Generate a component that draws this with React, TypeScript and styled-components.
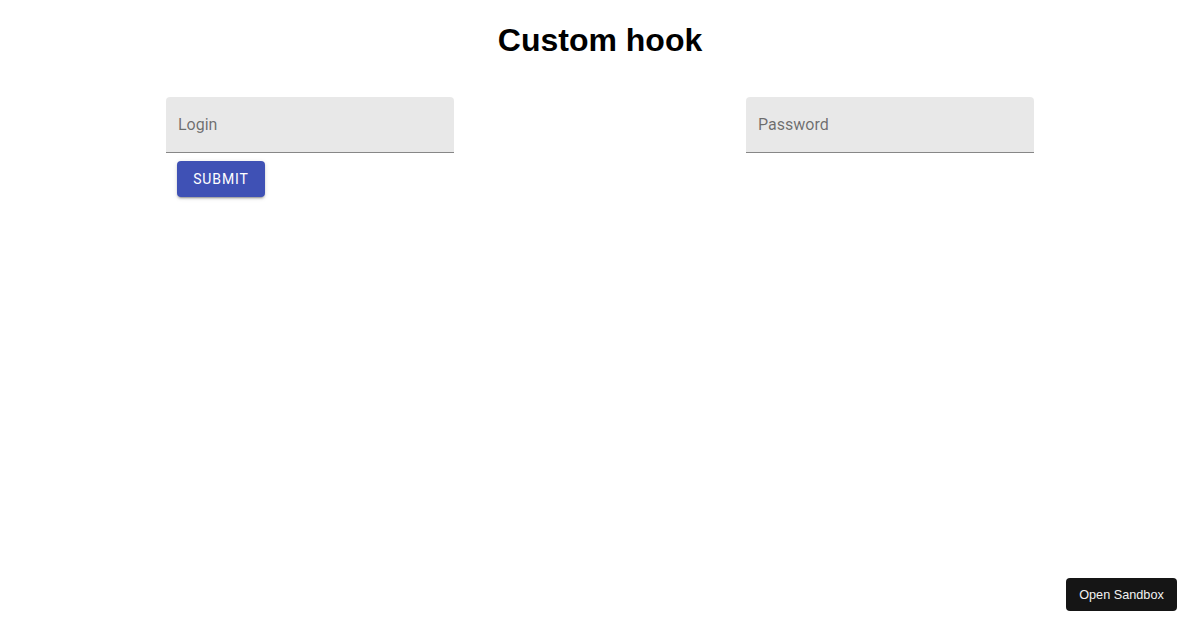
import styled, { createGlobalStyle } from "styled-components";

const GlobalStyle = createGlobalStyle`
  html, body {
    margin: 0;
    padding: 0;
    background: #ffffff;
    font-family: "Roboto", "Liberation Sans", Arial, sans-serif;
  }
`;

const Page = styled.div`
  width: 1200px;
  height: 630px;
  position: relative;
  display: flex;
  flex-direction: column;
  align-items: center;
`;

const Title = styled.h1`
  margin: 22px 0 0;
  font-family: "Liberation Sans", Arial, sans-serif;
  font-size: 32px;
  font-weight: 700;
  line-height: 37px;
  color: #000;
`;

const FormRow = styled.div`
  width: 868px;
  margin-top: 38px;
  display: flex;
  justify-content: space-between;
  align-items: flex-start;
`;

const Column = styled.div`
  display: flex;
  flex-direction: column;
  align-items: flex-start;
`;

const Field = styled.div`
  width: 288px;
  height: 56px;
  box-sizing: border-box;
  background: rgba(0, 0, 0, 0.09);
  border-radius: 4px 4px 0 0;
  border-bottom: 1px solid rgba(0, 0, 0, 0.42);
  display: flex;
  align-items: center;
  padding: 0 12px;
`;

const Label = styled.span`
  font-size: 16px;
  color: rgba(0, 0, 0, 0.54);
  line-height: 1;
`;

const SubmitButton = styled.button`
  margin: 8px 0 0 11px;
  width: 88px;
  height: 36px;
  border: none;
  border-radius: 4px;
  background: #3f51b5;
  color: #fff;
  font-family: "Roboto", "Liberation Sans", Arial, sans-serif;
  font-size: 14px;
  font-weight: 400;
  letter-spacing: 0.9px;
  text-transform: uppercase;
  box-shadow: 0 3px 1px -2px rgba(0, 0, 0, 0.2), 0 2px 2px 0 rgba(0, 0, 0, 0.14),
    0 1px 5px 0 rgba(0, 0, 0, 0.12);
  cursor: pointer;
`;

const SandboxButton = styled.button`
  position: absolute;
  right: 23px;
  bottom: 19px;
  width: 111px;
  height: 33px;
  border: none;
  border-radius: 4px;
  background: #151515;
  color: #f2f2f2;
  font-family: "Liberation Sans", Arial, sans-serif;
  font-size: 12.7px;
  cursor: pointer;
`;

function App() {
  return (
    <>
      <GlobalStyle />
      <Page>
        <Title>Custom hook</Title>
        <FormRow>
          <Column>
            <Field>
              <Label>Login</Label>
            </Field>
            <SubmitButton>Submit</SubmitButton>
          </Column>
          <Column>
            <Field>
              <Label>Password</Label>
            </Field>
          </Column>
        </FormRow>
        <SandboxButton>Open Sandbox</SandboxButton>
      </Page>
    </>
  );
}

export default App;
